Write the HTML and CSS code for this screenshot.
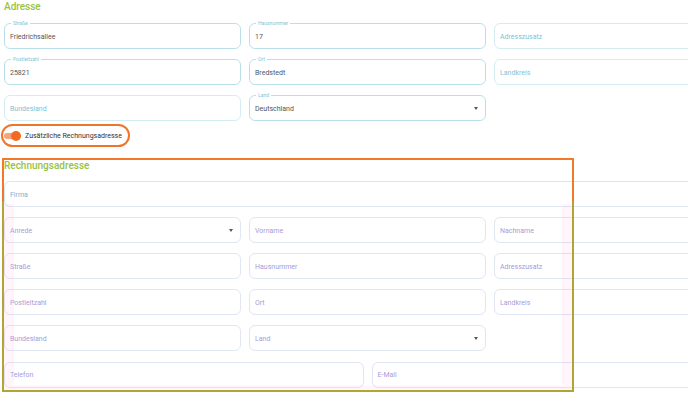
FILE: index.html
```html
<!DOCTYPE html>
<html lang="de">
<head>
  <meta charset="UTF-8" />
  <title>Adresse</title>
  <link rel="stylesheet" href="styles.css">
</head>
<body>
  <div class="page">
    <h2 class="section-title">Adresse</h2>
    <div class="grid three">
      <div class="field filled"><span class="float-label">Straße</span>Friedrichsallee</div>
      <div class="field filled"><span class="float-label">Hausnummer</span>17</div>
      <div class="field empty">Adresszusatz</div>
      <div class="field filled"><span class="float-label">Postleitzahl</span>25821</div>
      <div class="field filled"><span class="float-label">Ort</span>Bredstedt</div>
      <div class="field empty">Landkreis</div>
      <div class="field empty">Bundesland</div>
      <div class="field filled select"><span class="float-label">Land</span>Deutschland<i class="caret"></i></div>
    </div>

    <div class="switch-row">
      <span class="switch"><span class="knob"></span></span>
      <span>Zusätzliche Rechnungsadresse</span>
      <span class="mark-ellipse"></span>
    </div>

    <section class="billing">
      <span class="mark-box"></span>
      <span class="mark-tint"></span>
      <h2 class="section-title">Rechnungsadresse</h2>
      <div class="field empty wide first">Firma</div>
      <div class="grid three">
        <div class="field empty alt select">Anrede<i class="caret"></i></div>
        <div class="field empty alt">Vorname</div>
        <div class="field empty alt">Nachname</div>
        <div class="field empty alt">Straße</div>
        <div class="field empty alt">Hausnummer</div>
        <div class="field empty alt">Adresszusatz</div>
        <div class="field empty alt">Postleitzahl</div>
        <div class="field empty alt">Ort</div>
        <div class="field empty alt">Landkreis</div>
        <div class="field empty alt">Bundesland</div>
        <div class="field empty alt select">Land<i class="caret"></i></div>
      </div>
      <div class="grid two">
        <div class="field empty alt">Telefon</div>
        <div class="field empty alt">E-Mail</div>
      </div>
    </section>
  </div>
</body>
</html>
```

FILE: styles.css
```css
* { margin: 0; padding: 0; box-sizing: border-box; }
body {
  font-family: Roboto, "Liberation Sans", sans-serif;
  background: #fff;
  color: #444;
  overflow: hidden;
}
.page {
  width: 727px;
  margin-left: 4px;
}
.section-title {
  font-size: 10px;
  line-height: 14px;
  font-weight: 500;
  color: #98c23f;
  margin-bottom: 9px;
}
.grid {
  display: grid;
  gap: 10px 8px;
}
.grid.three { grid-template-columns: repeat(3, 1fr); }
.grid.two { grid-template-columns: repeat(2, 1fr); }
.field {
  position: relative;
  height: 26px;
  border: 1px solid #b9e0e9;
  border-radius: 6px;
  display: flex;
  align-items: center;
  padding: 1px 5px 0;
  font-size: 7px;
  color: #555;
}
.field.empty {
  border-color: #d3edf3;
  color: #7fbfd6;
}
.field.alt {
  border-color: #e1e6f3;
  color: #a79cd6;
}
.field.first {
  border-color: #cfeaf1 #cfeaf1 #e1e6f3;
  color: #7ab3d8;
  margin-bottom: 10.4px;
}
.float-label {
  position: absolute;
  top: -4px;
  left: 6px;
  padding: 0 2px;
  background: #fff;
  font-size: 5px;
  line-height: 7px;
  color: #7fc6d7;
}
.caret {
  position: absolute;
  right: 7px;
  top: 11px;
  border-left: 2.5px solid transparent;
  border-right: 2.5px solid transparent;
  border-top: 3px solid #555;
}
.billing .grid { margin-bottom: 10.4px; }

.switch-row {
  position: relative;
  height: 23px;
  margin-top: 3px;
  display: flex;
  align-items: center;
  gap: 5px;
  font-size: 7px;
  color: #333;
}
.switch {
  position: relative;
  width: 16px;
  height: 6px;
  border-radius: 3px;
  background: #f7a47a;
}
.knob {
  position: absolute;
  right: -1px;
  top: -2px;
  width: 10px;
  height: 10px;
  border-radius: 50%;
  background: #f26a21;
}
.mark-ellipse {
  position: absolute;
  left: -3px;
  top: 0;
  width: 129px;
  height: 23px;
  border: 2px solid #f0752a;
  border-radius: 12px;
}

.billing {
  position: relative;
  margin-top: 11px;
  padding-top: 1px;
}
.billing .section-title { margin-bottom: 8px; }
.mark-box {
  position: absolute;
  left: -2px;
  top: 0;
  width: 572px;
  height: 234px;
  border: 2px solid;
  border-image: linear-gradient(to bottom, #f4782c 0, #f4782c 18%, #b3a535 18%, #b3a535 100%) 1;
  z-index: 2;
  pointer-events: none;
}
.mark-tint {
  position: absolute;
  left: 0;
  top: 46px;
  width: 568px;
  height: 186px;
  border: 10px solid rgba(255, 170, 225, 0.12);
  border-top: none;
  border-bottom-width: 5px;
  z-index: 1;
  pointer-events: none;
}
```
